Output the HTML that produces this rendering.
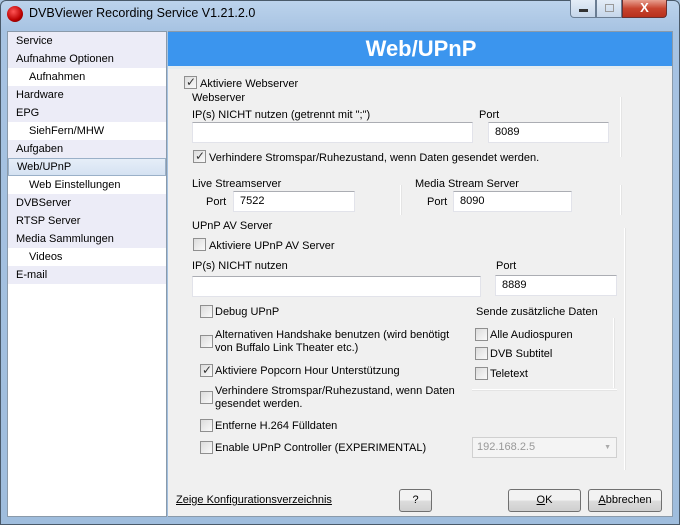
<!DOCTYPE html><html><head><meta charset="utf-8"><style>
*{margin:0;padding:0;box-sizing:border-box}
body{width:680px;height:525px;overflow:hidden;font-family:"Liberation Sans",sans-serif;font-size:11px;line-height:15px;color:#000;background:#a9c4e0;position:relative}
.a{position:absolute;white-space:nowrap}
.t{margin-top:1px}
.frame{position:absolute;left:0;top:0;width:680px;height:525px;background:linear-gradient(#bcd3ec,#a7c3e2 30px,#9fbddd);border:1px solid #4a5a6a;border-radius:6px 6px 0 0}
.side{position:absolute;left:7px;top:31px;width:160px;height:486px;background:#fff;border:1px solid #8a9aaa}
.it{position:absolute;left:0;width:158px;height:18px;line-height:18px;padding-left:8px}
.top{background:#ececf7}
.sub{padding-left:21px;background:#fff}
.main{position:absolute;left:168px;top:31px;width:505px;height:486px;background:#f0f0f0;border:1px solid #8a9aaa;border-left:none}
.hdr{position:absolute;left:0;top:0;width:504px;height:34px;background:#3b95ee;color:#fff;font-weight:bold;font-size:22px;text-align:center;line-height:34px;padding-left:2px}
.cb{position:absolute;width:13px;height:13px;border:1px solid #8f8f8f;background:linear-gradient(135deg,#dcdcdc,#fafafa)}
.cb.c::after{content:"✓";position:absolute;left:1px;top:-2px;font-size:12px;color:#333}
.tb{position:absolute;height:21px;background:#fff;border:1px solid #e2e3ea;border-top-color:#abadb3;padding-left:6px;line-height:19px}
.btn{position:absolute;height:23px;border:1px solid #707070;border-radius:3px;background:linear-gradient(#f2f2f2 50%,#dddddd 50%,#cfcfcf);text-align:center;line-height:21px}
.vl{position:absolute;width:2px;background:#e4e4e4;border-left:1px solid #fff}
</style></head><body>
<div class="frame"></div>
<div class="a" style="left:7px;top:6px;width:16px;height:16px;border-radius:50%;background:radial-gradient(circle at 40% 35%,#f55,#b00 60%,#500)"></div>
<div class="a" style="left:29px;top:6px;font-size:12.5px;color:#000">DVBViewer Recording Service V1.21.2.0</div>
<div class="a" style="left:570px;top:0;width:26px;height:18px;border:1px solid #6a7d93;border-top:none;border-radius:0 0 0 4px;background:linear-gradient(#e4edf7,#c5d6ea)"><div class="a" style="left:8px;top:9px;width:9px;height:3px;background:#333"></div></div>
<div class="a" style="left:596px;top:0;width:26px;height:18px;border:1px solid #6a7d93;border-top:none;background:linear-gradient(#e4edf7,#c5d6ea)"><div class="a" style="left:8px;top:4px;width:9px;height:8px;border:1px solid #999"></div></div>
<div class="a" style="left:622px;top:0;width:45px;height:18px;border:1px solid #6a3030;border-top:none;border-radius:0 0 4px 0;background:linear-gradient(#e8a090,#c8442e 50%,#b8301c);color:#fff;font-weight:bold;font-size:13px;text-align:center;line-height:16px">X</div>

<div class="side">
<div class="it top" style="top:0">Service</div>
<div class="it top" style="top:18px">Aufnahme Optionen</div>
<div class="it sub" style="top:36px">Aufnahmen</div>
<div class="it top" style="top:54px">Hardware</div>
<div class="it top" style="top:72px">EPG</div>
<div class="it sub" style="top:90px">SiehFern/MHW</div>
<div class="it top" style="top:108px">Aufgaben</div>
<div class="it top" style="top:126px;background:linear-gradient(#e6eef8,#d5e2f2);border:1px solid #9ab0c8;line-height:16px">Web/UPnP</div>
<div class="it sub" style="top:144px">Web Einstellungen</div>
<div class="it top" style="top:162px">DVBServer</div>
<div class="it top" style="top:180px">RTSP Server</div>
<div class="it top" style="top:198px">Media Sammlungen</div>
<div class="it sub" style="top:216px">Videos</div>
<div class="it top" style="top:234px">E-mail</div>
</div>

<div class="main"><div class="hdr">Web/UPnP</div>
<div class="a" style="left:0;top:34px;width:504px;height:3px;background:#e4ecf0"></div></div>

<div class="cb c" style="left:184px;top:76px"></div><div class="a t" style="left:200px;top:76px">Aktiviere Webserver</div>
<div class="a t" style="left:192px;top:90px">Webserver</div>
<div class="vl" style="left:620px;top:97px;height:60px"></div>
<div class="a t" style="left:192px;top:107px">IP(s) NICHT nutzen (getrennt mit ";")</div>
<div class="a t" style="left:479px;top:107px">Port</div>
<div class="tb" style="left:192px;top:122px;width:281px"></div>
<div class="tb" style="left:488px;top:122px;width:121px">8089</div>
<div class="cb c" style="left:193px;top:150px"></div><div class="a t" style="left:209px;top:150px">Verhindere Stromspar/Ruhezustand, wenn Daten gesendet werden.</div>
<div class="a t" style="left:192px;top:176px">Live Streamserver</div>
<div class="a t" style="left:415px;top:176px">Media Stream Server</div>
<div class="vl" style="left:400px;top:185px;height:30px"></div>
<div class="vl" style="left:620px;top:185px;height:30px"></div>
<div class="a t" style="left:206px;top:194px">Port</div><div class="tb" style="left:233px;top:191px;width:122px">7522</div>
<div class="a t" style="left:427px;top:194px">Port</div><div class="tb" style="left:453px;top:191px;width:119px">8090</div>
<div class="a t" style="left:192px;top:218px">UPnP AV Server</div>
<div class="vl" style="left:624px;top:228px;height:242px"></div>
<div class="cb" style="left:193px;top:238px"></div><div class="a t" style="left:209px;top:238px">Aktiviere UPnP AV Server</div>
<div class="a t" style="left:192px;top:258px">IP(s) NICHT nutzen</div>
<div class="a t" style="left:496px;top:258px">Port</div>
<div class="tb" style="left:192px;top:276px;width:289px"></div>
<div class="tb" style="left:495px;top:275px;width:122px">8889</div>

<div class="cb" style="left:200px;top:305px"></div><div class="a t" style="left:215px;top:304px">Debug UPnP</div>
<div class="cb" style="left:200px;top:335px"></div><div class="a t" style="left:215px;top:328px;line-height:13px">Alternativen Handshake benutzen (wird benötigt<br>von Buffalo Link Theater etc.)</div>
<div class="cb c" style="left:200px;top:364px"></div><div class="a t" style="left:215px;top:363px">Aktiviere Popcorn Hour Unterstützung</div>
<div class="cb" style="left:200px;top:391px"></div><div class="a t" style="left:215px;top:384px;line-height:13px">Verhindere Stromspar/Ruhezustand, wenn Daten<br>gesendet werden.</div>
<div class="cb" style="left:200px;top:419px"></div><div class="a t" style="left:215px;top:418px">Entferne H.264 Fülldaten</div>
<div class="cb" style="left:200px;top:441px"></div><div class="a t" style="left:215px;top:440px">Enable UPnP Controller (EXPERIMENTAL)</div>

<div class="a t" style="left:476px;top:304px">Sende zusätzliche Daten</div>
<div class="vl" style="left:613px;top:318px;height:70px"></div>
<div class="a" style="left:472px;top:389px;width:145px;height:2px;background:#e4e4e4;border-top:1px solid #fff"></div>
<div class="cb" style="left:475px;top:328px"></div><div class="a t" style="left:490px;top:327px">Alle Audiospuren</div>
<div class="cb" style="left:475px;top:347px"></div><div class="a t" style="left:490px;top:346px">DVB Subtitel</div>
<div class="cb" style="left:475px;top:367px"></div><div class="a t" style="left:490px;top:366px">Teletext</div>
<div class="a" style="left:472px;top:437px;width:145px;height:21px;border:1px solid #d0d0d0;background:#f4f4f4;color:#999;padding-left:4px;line-height:19px">192.168.2.5<span style="position:absolute;right:5px;top:0;font-size:7px;color:#aaa">▼</span></div>

<div class="a" style="left:176px;top:493px;text-decoration:underline">Zeige Konfigurationsverzeichnis</div>
<div class="btn" style="left:399px;top:489px;width:33px">?</div>
<div class="btn" style="left:508px;top:489px;width:73px"><u>O</u>K</div>
<div class="btn" style="left:588px;top:489px;width:74px"><u>A</u>bbrechen</div>
</body></html>
